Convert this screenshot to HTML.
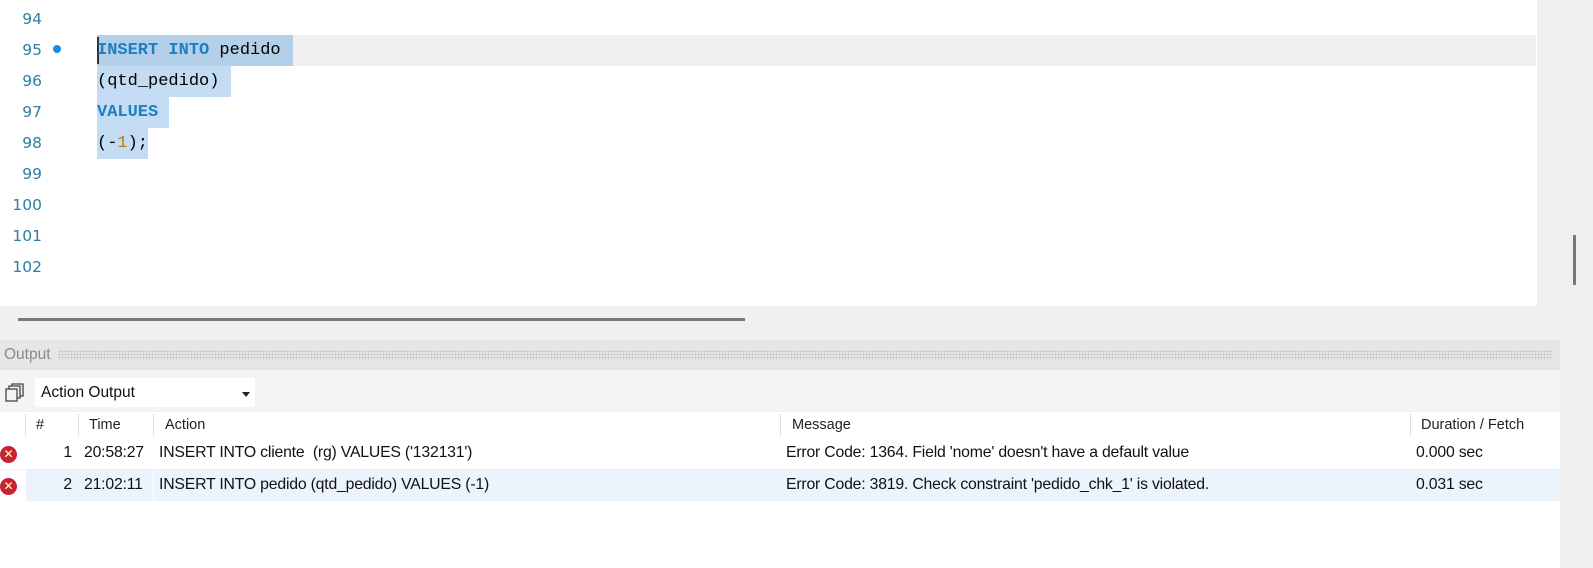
<!DOCTYPE html>
<html><head><meta charset="utf-8"><style>
*{margin:0;padding:0;box-sizing:border-box}
body{width:1593px;height:568px;overflow:hidden;background:#f0f0f0;position:relative;font-family:"Liberation Sans",sans-serif}
.ed{position:absolute;left:0;top:0;width:1537px;height:306px;background:#fff}
.ln{position:absolute;left:0;width:42px;text-align:right;font:15.5px "DejaVu Sans",sans-serif;color:#2e7ea3}
.code{position:absolute;left:97px;font:17px "Liberation Mono",monospace;height:31px;line-height:31px;white-space:pre;color:#000}
.kw{color:#1c7fc4;font-weight:bold}
.sel{position:absolute;background:#c3dcf3;height:31px}
.hdr{position:absolute;left:0;top:340px;width:1560px;height:30px;background:#e6e6e6}
.dots{position:absolute;left:58px;top:350px;width:1495px;height:10px;background-image:radial-gradient(#c4c4c4 0.8px,transparent 1px);background-size:3px 3px}
.tb{position:absolute;left:0;top:370px;width:1560px;height:41px;background:#f4f4f6}
.th{position:absolute;top:412px;height:26px;background:#fff;font-size:14.5px;color:#222;line-height:26px}
.row{position:absolute;left:0;width:1560px;height:31px;font-size:15.8px;color:#111;line-height:30px;letter-spacing:-0.2px}
.c{position:absolute;top:0;height:100%;white-space:nowrap}
.sep{position:absolute;top:414px;width:1px;height:22px;background:#ddd}
.x{position:absolute;left:0;top:8px;width:17px;height:17px;border-radius:50%;background:#c8262f;color:#fff;font:bold 12px/17px "DejaVu Sans",sans-serif;text-align:center;letter-spacing:0}
</style></head><body>
<div class="ed">
 <div style="position:absolute;left:293px;top:35px;width:1243px;height:31px;background:#f0f0f0"></div>
 <div class="sel" style="left:97px;top:35px;width:196px;background:#b4d0e8"></div>
 <div class="sel" style="left:97px;top:66px;width:134px"></div>
 <div class="sel" style="left:97px;top:97px;width:72px"></div>
 <div class="sel" style="left:97px;top:128px;width:51px"></div>
 <div style="position:absolute;left:97px;top:37px;width:2px;height:27px;background:#333"></div>
 <div class="ln" style="top:10px">94</div>
 <div class="ln" style="top:41px">95</div>
 <div style="position:absolute;left:53px;top:45px;width:8px;height:8px;border-radius:50%;background:#1e88e5"></div>
 <div class="ln" style="top:72px">96</div>
 <div class="ln" style="top:103px">97</div>
 <div class="ln" style="top:134px">98</div>
 <div class="ln" style="top:165px">99</div>
 <div class="ln" style="top:196px">100</div>
 <div class="ln" style="top:227px">101</div>
 <div class="ln" style="top:258px">102</div>
 <div class="code" style="top:35px"><span class="kw">INSERT INTO</span> pedido</div>
 <div class="code" style="top:66px">(qtd_pedido)</div>
 <div class="code" style="top:97px"><span class="kw">VALUES</span></div>
 <div class="code" style="top:128px">(-<span style="color:#c07a10">1</span>);</div>
</div>
<div style="position:absolute;left:1573px;top:235px;width:3px;height:50px;background:#777"></div>
<div style="position:absolute;left:18px;top:318px;width:727px;height:3px;background:#7a7a7a"></div>
<div class="hdr"></div>
<div style="position:absolute;left:4px;top:346px;font-size:15.5px;color:#8a8a8a">Output</div>
<div class="dots"></div>
<div class="tb"></div>
<svg style="position:absolute;left:5px;top:383px" width="20" height="20" viewBox="0 0 20 20" fill="none" stroke="#444" stroke-width="1.3"><rect x="1" y="6" width="11" height="12"/><path d="M4 6V3h11v12h-3M7 3V1h11v12h-3"/></svg>
<div style="position:absolute;left:35px;top:378px;width:220px;height:29px;background:#fff"></div>
<div style="position:absolute;left:41px;top:384px;font-size:15.5px;color:#111">Action Output</div>
<div style="position:absolute;left:242px;top:392px;border-left:4px solid transparent;border-right:4px solid transparent;border-top:5px solid #222"></div>
<div class="th" style="left:0;width:1560px"></div>
<div class="sep" style="left:25px"></div><div class="sep" style="left:78px"></div><div class="sep" style="left:153px"></div><div class="sep" style="left:780px"></div><div class="sep" style="left:1410px"></div>
<div class="th" style="left:36px">#</div>
<div class="th" style="left:89px">Time</div>
<div class="th" style="left:165px">Action</div>
<div class="th" style="left:792px">Message</div>
<div class="th" style="left:1421px">Duration / Fetch</div>
<div class="row" style="top:438px;background:#fff">
 <div class="x">✕</div>
 <div class="c" style="left:25px;width:47px;text-align:right">1</div>
 <div class="c" style="left:84px">20:58:27</div>
 <div class="c" style="left:159px">INSERT INTO cliente&nbsp; (rg) VALUES ('132131')</div>
 <div class="c" style="left:786px">Error Code: 1364. Field 'nome' doesn't have a default value</div>
 <div class="c" style="left:1416px">0.000 sec</div>
</div>
<div class="row" style="top:470px;background:#fff"><div style="position:absolute;left:26px;top:0;width:1534px;height:31px;background:#ebf3fc"></div>
 <div class="x">✕</div>
 <div class="c" style="left:25px;width:47px;text-align:right">2</div>
 <div class="c" style="left:84px">21:02:11</div>
 <div class="c" style="left:159px">INSERT INTO pedido (qtd_pedido) VALUES (-1)</div>
 <div class="c" style="left:786px">Error Code: 3819. Check constraint 'pedido_chk_1' is violated.</div>
 <div class="c" style="left:1416px">0.031 sec</div>
</div>
<div style="position:absolute;left:0;top:501px;width:1560px;height:67px;background:#fff"></div>
<div style="position:absolute;left:153px;top:470px;width:1px;height:31px;background:#fff"></div>
</body></html>
